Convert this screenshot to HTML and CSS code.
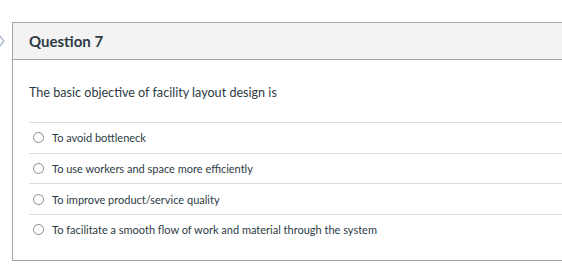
FILE: index.html
```html
<!DOCTYPE html>
<html lang="en">
<head>
  <meta charset="UTF-8">
  <meta name="viewport" content="width=device-width, initial-scale=1.0">
  <title>Question 7</title>
  <link rel="stylesheet" href="styles.css">
</head>
<body>
  <div class="page">
    <svg class="nav-arrow" width="7" height="14" viewBox="0 0 7 14">
      <polyline points="0,1 5,7 0,13" fill="none" stroke="#9fb2c6" stroke-width="1.2"/>
    </svg>
    <div class="question">
      <div class="question-header">Question 7</div>
      <div class="question-body">
        <p class="question-text">The basic objective of facility layout design is</p>
        <ul class="answers">
          <li class="answer"><span class="radio"></span>To avoid bottleneck</li>
          <li class="answer"><span class="radio"></span>To use workers and space more efficiently</li>
          <li class="answer"><span class="radio"></span>To improve product/service quality</li>
          <li class="answer"><span class="radio"></span>To facilitate a smooth flow of work and material through the system</li>
        </ul>
      </div>
    </div>
  </div>
</body>
</html>
```

FILE: styles.css
```css
body {
  margin: 0;
  font-family: Lato, "Open Sans", sans-serif;
  color: #2d3b45;
  background-color: #fff;
  overflow: hidden;
}

.page {
  display: flex;
  align-items: flex-start;
  padding-top: 22px;
}

.nav-arrow {
  margin-top: 12px;
  margin-left: -1px;
  margin-right: 6px;
  flex-shrink: 0;
}

.question {
  width: 600px;
  flex-shrink: 0;
  border: 1px solid #a5a5a5;
  border-right: none;
}

.question-header {
  height: 36px;
  line-height: 36px;
  padding-left: 16px;
  font-size: 15px;
  font-weight: bold;
  background-color: #f3f3f3;
  border-bottom: 1px solid #a5a5a5;
}

.question-body {
  padding: 0 0 15px 16px;
}

.question-text {
  margin: 0;
  height: 62px;
  line-height: 66px;
  font-size: 12.6px;
}

.answers {
  list-style: none;
  margin: 0;
  padding: 0;
}

.answer {
  box-sizing: border-box;
  display: flex;
  align-items: center;
  height: 30.7px;
  border-top: 1px solid #dcdcdc;
  font-size: 11px;
}

.radio {
  width: 9px;
  height: 9px;
  border: 1px solid #8a8a8a;
  border-radius: 50%;
  margin-left: 4px;
  margin-right: 8px;
}
```
